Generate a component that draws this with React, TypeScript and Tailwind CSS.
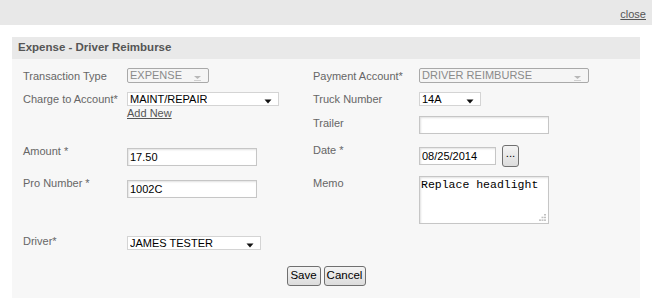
import type { ReactNode } from 'react';

function Label({ children, right, className = '' }: { children: ReactNode; right?: boolean; className?: string }) {
  return (
    <div
      className={`${right ? 'w-[106px]' : 'w-[104px]'} shrink-0 text-[11px] leading-[14px] text-[#666] ${className}`}
    >
      {children}
    </div>
  );
}

function Arrow({ disabled }: { disabled?: boolean }) {
  if (disabled) {
    return (
      <svg width="9" height="6" viewBox="0 0 9 6" className="mt-[5px]" aria-hidden="true">
        <path d="M1 1h7L4.5 4z" fill="#b8b8b8" />
        <path d="M1 5.5h7" stroke="#d0d0d0" strokeWidth="1" />
      </svg>
    );
  }
  return (
    <svg width="8" height="5" viewBox="0 0 8 5" className="mt-[5px]" aria-hidden="true">
      <path d="M0.5 0.5h7L4 4.5z" fill="#111" />
    </svg>
  );
}

function FakeSelect({
  value,
  width,
  height,
  disabled,
}: {
  value: string;
  width: string;
  height: string;
  disabled?: boolean;
}) {
  return (
    <div
      className={`${width} ${height} flex items-center justify-between pl-[2px] pr-[6px] text-[11px] leading-none ${
        disabled
          ? 'border border-[#a9a9a9] rounded-[2px] bg-[#f5f5f5] text-[#8a8a8a]'
          : 'border border-[#d4d4d4] bg-white text-black'
      }`}
    >
      <span className="truncate">{value}</span>
      <Arrow disabled={disabled} />
    </div>
  );
}

function TextBox({ value, width }: { value: string; width: string }) {
  return (
    <input
      readOnly
      value={value}
      className={`${width} h-[18px] border border-[#c6c6c6] bg-white pl-[2px] text-[11px] text-black outline-none shadow-[inset_1px_1px_2px_rgba(0,0,0,0.12)] font-['Liberation_Sans',Arial,sans-serif]`}
    />
  );
}

function WinButton({ children, className = '' }: { children: ReactNode; className?: string }) {
  return (
    <button
      className={`rounded-[3px] border border-[#707070] bg-linear-to-b from-[#f4f4f4] to-[#dcdcdc] text-[11.5px] leading-none text-black ${className}`}
    >
      {children}
    </button>
  );
}

export default function App() {
  return (
    <div className="min-h-[298px] w-full bg-white font-['Liberation_Sans',Arial,sans-serif]">
      <div className="flex h-[25px] items-center justify-end bg-[#e8e8e8] pr-[6px] pt-[3px]">
        <a className="text-[11px] text-[#555] underline cursor-pointer">close</a>
      </div>

      <div className="mx-[12px] mt-[12px]">
        <div className="flex h-[22px] items-center bg-[#e9e9e9] px-[6px] text-[11.5px] font-bold text-[#555]">
          Expense - Driver Reimburse
        </div>

        <div className="bg-[#f7f7f7] pl-[11px] pt-[9px] pb-[12px]">
          {/* row 1 */}
          <div className="flex h-[24px] items-start">
            <Label className="pt-[1px]">Transaction Type</Label>
            <div className="w-[186px] shrink-0">
              <FakeSelect value="EXPENSE" width="w-[82px]" height="h-[15px]" disabled />
            </div>
            <Label right className="pt-[1px]">Payment Account*</Label>
            <FakeSelect value="DRIVER REIMBURSE" width="w-[170px]" height="h-[15px]" disabled />
          </div>

          {/* row 2 */}
          <div className="flex h-[24px] items-start">
            <Label>Charge to Account*</Label>
            <div className="w-[186px] shrink-0">
              <FakeSelect value="MAINT/REPAIR" width="w-[152px]" height="h-[14px]" />
              <a className="mt-[1px] block w-fit text-[11px] leading-[13px] text-[#555] underline cursor-pointer">
                Add New
              </a>
            </div>
            <Label right>Truck Number</Label>
            <FakeSelect value="14A" width="w-[62px]" height="h-[14px]" />
          </div>

          {/* row 3 */}
          <div className="flex h-[28px] items-start">
            <Label />
            <div className="w-[186px] shrink-0" />
            <Label right>Trailer</Label>
            <TextBox value="" width="w-[130px]" />
          </div>

          {/* row 4 */}
          <div className="flex h-[32px] items-start">
            <Label>Amount *</Label>
            <div className="w-[186px] shrink-0">
              <TextBox value="17.50" width="w-[130px]" />
            </div>
            <Label right className="-mt-[1px]">Date *</Label>
            <div className="mt-[1px] flex h-[22px] items-center gap-[6px]">
              <TextBox value="08/25/2014" width="w-[77px]" />
              <WinButton className="h-[22px] w-[17px] pb-[4px] text-[10px]">...</WinButton>
            </div>
          </div>

          {/* row 5 */}
          <div className="flex h-[60px] items-start">
            <Label>Pro Number *</Label>
            <div className="w-[186px] shrink-0">
              <TextBox value="1002C" width="w-[130px]" />
            </div>
            <Label right>Memo</Label>
            <div className="relative">
              <textarea
                readOnly
                value="Replace headlight"
                className="block h-[48px] w-[130px] resize-none border border-[#c6c6c6] bg-white px-[1px] pt-[1px] font-['Liberation_Mono','Courier_New',monospace] text-[11.5px] leading-[14px] text-black outline-none shadow-[inset_1px_1px_2px_rgba(0,0,0,0.12)]"
              />
              <svg width="7" height="7" viewBox="0 0 7 7" className="absolute bottom-[3px] right-[3px]" aria-hidden="true">
                <rect x="5" y="0" width="2" height="1.5" fill="#c0c0c0" />
                <rect x="5" y="2.7" width="2" height="1.5" fill="#c0c0c0" />
                <rect x="2.5" y="2.7" width="2" height="1.5" fill="#c0c0c0" />
                <rect x="5" y="5.4" width="2" height="1.5" fill="#c0c0c0" />
                <rect x="2.5" y="5.4" width="2" height="1.5" fill="#c0c0c0" />
                <rect x="0" y="5.4" width="2" height="1.5" fill="#c0c0c0" />
              </svg>
            </div>
          </div>

          {/* row 6 */}
          <div className="flex h-[30px] items-start">
            <Label className="-mt-[2px]">Driver*</Label>
            <div className="w-[186px] shrink-0">
              <FakeSelect value="JAMES TESTER" width="w-[134px]" height="h-[14px]" />
            </div>
          </div>

          <div className="-ml-[11px] flex h-[20px] items-center justify-center gap-[3px]">
            <WinButton className="h-[20px] w-[34px]">Save</WinButton>
            <WinButton className="h-[20px] w-[42px]">Cancel</WinButton>
          </div>
        </div>
      </div>
    </div>
  );
}
